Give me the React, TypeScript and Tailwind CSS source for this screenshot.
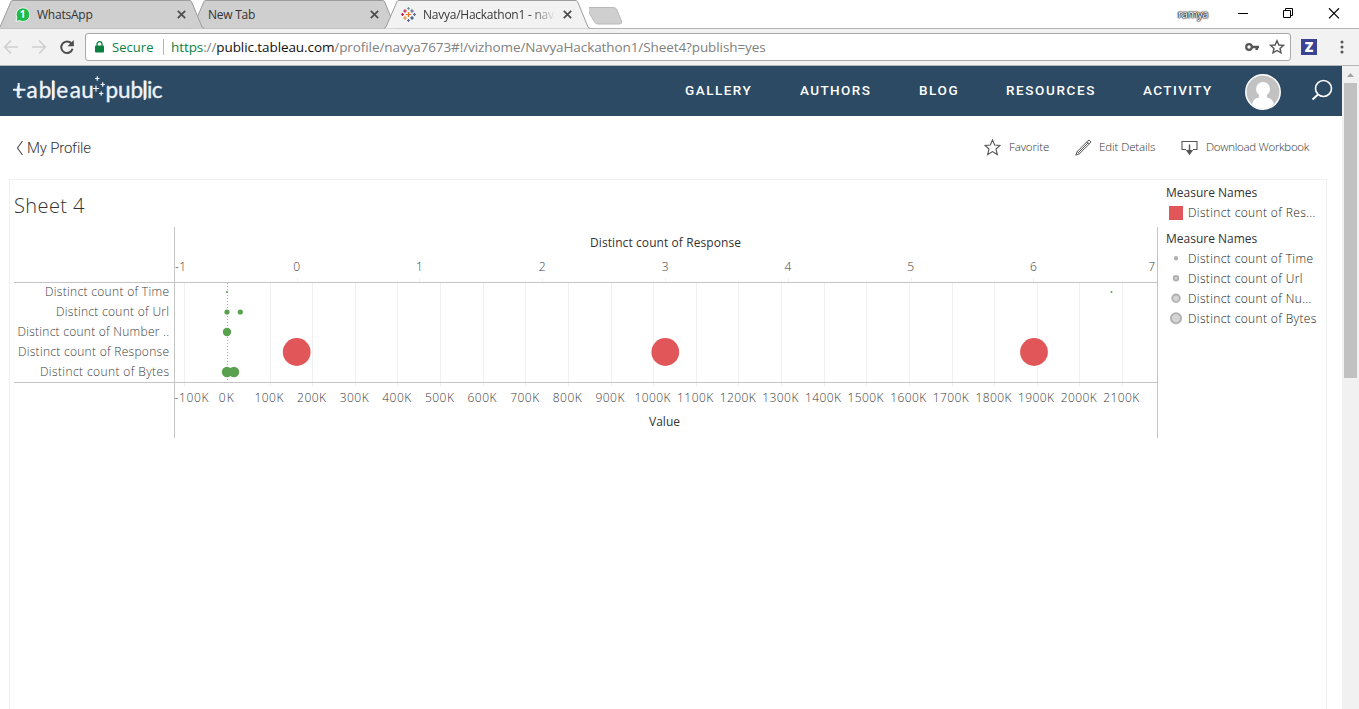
import React from 'react';

const UI = "font-['Open_Sans','Noto_Sans',sans-serif]";

function TabShape({ active }: { active?: boolean }) {
  return (
    <svg className="absolute inset-0" width="206" height="29" viewBox="0 0 206 29" aria-hidden="true">
      <path
        d="M0 28.5 L2 27 L13 1 Q13.500 0 15 0 L191 0 Q193 0 193.500 1 L204 27 L206 28.500 Z"
        fill={active ? '#f2f2f2' : '#cfcfcf'}
      />
      <path
        d="M0 28.500 L2 27 L13 1.500 Q13.500 .5 15 .5 L191 .5 Q193 .5 193.500 1.500 L204 27 L206 28.500"
        fill="none"
        stroke="#9d9d9d"
      />
    </svg>
  );
}

function CloseX() {
  return (
    <svg width="9" height="9" viewBox="0 0 9 9" className="shrink-0">
      <path d="M.8 .8 L8.200 8.200 M8.200 .8 L.8 8.200" stroke="#4c4c4c" strokeWidth="1.700" />
    </svg>
  );
}

const favicon: [number, number, number, string][] = [
  [7.5, 7.5, 2.6, '#e8762b'],
  [4, 4, 1.8, '#c7203e'],
  [11, 4, 1.8, '#5b6591'],
  [4, 11, 1.8, '#eb912b'],
  [11, 11, 1.8, '#1f447e'],
  [7.5, 1.5, 1.4, '#7099a5'],
  [7.5, 13.5, 1.4, '#5b6591'],
  [1.5, 7.5, 1.4, '#c7203e'],
  [13.5, 7.5, 1.4, '#5c6692'],
];

function TabStrip() {
  return (
    <div className="flex h-7 w-full items-start bg-white">
      <div className="relative z-20 -ml-0.5 flex h-[29px] w-[206px] shrink-0 items-center pl-[17px]">
        <TabShape />
        <svg className="relative shrink-0" width="15" height="15" viewBox="0 0 15 15">
          <path d="M1 14.500 L1.800 10.500 A6.800 6.800 0 1 1 4.500 13.500 Z" fill="#1cbb4a" stroke="#eef8ee" />
          <text x="7.700" y="11" fontSize="10" fontWeight="700" fill="#fff" textAnchor="middle" fontFamily="Open Sans">
            1
          </text>
        </svg>
        <span className="relative ml-[7px] w-[140px] text-[12px] tracking-[-0.22px] text-[#333]">WhatsApp</span>
        <span className="relative"><CloseX /></span>
      </div>
      <div className="relative z-10 -ml-[13px] flex h-[29px] w-[206px] shrink-0 items-center pl-[17px]">
        <TabShape />
        <span className="relative w-[162px] text-[12px] tracking-[-0.25px] text-[#333]">New Tab</span>
        <span className="relative"><CloseX /></span>
      </div>
      <div className="relative z-30 -ml-[13px] flex h-[29px] w-[206px] shrink-0 items-center pl-[17px]">
        <TabShape active />
        <svg className="relative shrink-0" width="15" height="15" viewBox="0 0 15 15">
          {favicon.map(([x, y, r, c], i) => (
            <path key={i} d={`M${x - r} ${y}H${x + r}M${x} ${y - r}V${y + r}`} stroke={c} strokeWidth="1.200" />
          ))}
        </svg>
        <span className="relative ml-[7px] w-[133px] whitespace-nowrap bg-gradient-to-r from-[#333] from-80% to-transparent bg-clip-text text-[12px] tracking-[-0.25px] text-transparent">
          Navya/Hackathon1 - nav
        </span>
        <span className="relative ml-[7px]"><CloseX /></span>
      </div>
      <svg className="-ml-px mt-[7px] shrink-0" width="36" height="18" viewBox="0 0 36 18">
        <path d="M1 .5 H25 Q27.500 .5 28.500 2 L33.500 14 Q34.500 17 31.500 17 H10 Q7.500 17 6.500 15 L-1 2 Q-1 .5 1 .5 Z" transform="translate(-1 0)" fill="#cfcfcf" stroke="#b9b9b9" />
      </svg>
      <div className="flex-1" />
      <span className="mr-[29px] mt-[6px] text-[11px] leading-4 tracking-[-0.45px] text-white [text-shadow:0_0_2px_#111,0_0_1px_#111,0_0_1px_#111,0_0_2px_#333]">
        ramya
      </span>
      <svg className="mt-2 shrink-0" width="122" height="12" viewBox="1237 8 122 12" fill="none" stroke="#000" strokeWidth="1">
        <path d="M1238 13.500H1248" />
        <path d="M1283.500 10.500H1290.500V17.500H1283.500Z M1285.500 10.500V8.500H1292.500V15.500H1290.500" />
        <path d="M1329 8.300L1339 18.300M1339 8.300L1329 18.300" strokeWidth="1.200" />
      </svg>
    </div>
  );
}

function Toolbar() {
  return (
    <div className="flex h-[38px] w-full items-center border-b border-t border-b-[#b4b6b8] border-t-[#b3b3b3] bg-[#f2f2f2]">
      <svg className="shrink-0" width="85" height="36" viewBox="0 29 85 36" fill="none" strokeWidth="1.600">
        <path d="M18 47H5M11 40.500L4.700 47L11 53.500" stroke="#cfcfcf" />
        <path d="M32 47H45M39 40.500L45.300 47L39 53.500" stroke="#cfcfcf" />
        <path d="M71.500 43.500A5.800 5.800 0 1 0 72.600 48.800" stroke="#4d4d4d" strokeWidth="2" />
        <path d="M73.800 40V46.300H67.500Z" fill="#4d4d4d" />
      </svg>
      <div className="flex h-7 w-[1206px] shrink-0 items-center rounded-[3px] border border-[#a8a8a8] bg-white pl-[9px] text-[14px]">
        <svg className="shrink-0" width="9" height="12" viewBox="0 0 9 12">
          <rect x="0" y="4.500" width="9" height="7" rx=".8" fill="#0b8043" />
          <path d="M2 5V3.200a2.500 2.500 0 0 1 5 0V5" fill="none" stroke="#0b8043" strokeWidth="1.300" />
        </svg>
        <span className="ml-2 w-[51px] pt-px text-[13px] tracking-[0.05px] text-[#0b8043]">Secure</span>
        <span className="h-4 w-px bg-[#b5b5b5]" />
        <span className="ml-[7px] whitespace-nowrap pt-px text-[13.5px] tracking-[-0.09px] text-[#808080]">
          <span className="text-[#0b8043]">https</span>://
          <span className="text-[#111]">public.tableau.com</span>
          /profile/navya7673#!/vizhome/NavyaHackathon1/Sheet4?publish=yes
        </span>
        <span className="flex-1" />
        <svg className="mr-[5px] shrink-0" width="41" height="16" viewBox="1244 39 41 16">
          <circle cx="1249" cy="47" r="2.800" fill="none" stroke="#555" strokeWidth="2.200" />
          <path d="M1252 45.800H1259V48.200H1258V50H1255.500V48.200H1252Z" fill="#555" />
          <path d="M1277 40.800L1278.900 45L1283.400 45.400L1280 48.400L1281 52.900L1277 50.500L1273 52.900L1274 48.400L1270.600 45.400L1275.100 45Z" fill="none" stroke="#555" strokeWidth="1.400" />
        </svg>
      </div>
      <span className="ml-[10px] flex size-4 items-center justify-center bg-[#3b4494] text-[14px] font-extrabold leading-4 text-white">Z</span>
      <svg className="ml-[22.5px]" width="4" height="14" viewBox="0 0 4 14" fill="#555">
        <circle cx="2" cy="2" r="1.500" />
        <circle cx="2" cy="7" r="1.500" />
        <circle cx="2" cy="12" r="1.500" />
      </svg>
    </div>
  );
}

function Logo() {
  return (
    <svg width="160" height="40" viewBox="8 72 160 40" fill="none" stroke="#edf3f9" className="shrink-0">
      <g fill="#edf3f9" strokeWidth=".35" fontFamily="Lato" fontSize="22.500">
        <text y="98.500" x="15.300 26.500 38.700 50.700 56.300 69.700 81.300">
          <tspan fontSize="18">t</tspan>ableau
        </text>
        <text y="98.500" x="105.500 118 130.600 142.500 147 151.800">public</text>
      </g>
      <path d="M13 90.700H25.500M18.700 84V96M52.900 81.500V101M144.700 81.500V101" strokeWidth="2" />
      <path d="M97.300 77.300V81.700M95.100 79.500H99.500M102.700 83.300V87.700M100.500 85.500H104.900M96 86.500V92.500M93 89.500H99M101.200 92.200V96.800M99 94.500H103.400" strokeWidth="1.200" />
    </svg>
  );
}

function SiteHeader() {
  return (
    <header className="flex h-[50px] shrink-0 items-center bg-[#2d4a64]">
      <div className="w-[677px] shrink-0 pl-2"><Logo /></div>
      <nav className="flex w-[568px] shrink-0 pb-[2px] pl-2 font-['Roboto',sans-serif] text-[13.5px] font-medium text-white">
        <a className="w-[115px] shrink-0 tracking-[1.5px]">GALLERY</a>
        <a className="w-[119px] shrink-0 tracking-[1.4px]">AUTHORS</a>
        <a className="w-[87px] shrink-0 tracking-[1.6px]">BLOG</a>
        <a className="w-[137px] shrink-0 tracking-[1.6px]">RESOURCES</a>
        <a className="shrink-0 tracking-[1.4px]">ACTIVITY</a>
      </nav>
      <svg className="shrink-0" width="36" height="50" viewBox="1245 66 36 50">
        <defs>
          <clipPath id="avatar"><circle cx="1263" cy="92" r="16.500" /></clipPath>
        </defs>
        <circle cx="1263" cy="92" r="17.200" fill="#c2c2c2" stroke="#fff" strokeWidth="1.500" />
        <g clipPath="url(#avatar)" fill="#fff">
          <circle cx="1263" cy="89" r="7" />
          <path d="M1259 93H1267V97.500C1272 98.500 1274 101 1274.500 109H1251.500C1252 101 1254 98.500 1259 97.500Z" />
        </g>
      </svg>
      <svg className="ml-[30px] shrink-0" width="24" height="24" viewBox="1311 79 24 24" fill="none" stroke="#fff">
        <circle cx="1323.500" cy="88.500" r="8" strokeWidth="1.600" />
        <path d="M1318 94.500L1312.500 99.500" strokeWidth="1.900" />
      </svg>
    </header>
  );
}

function ProfileBar() {
  return (
    <div className="flex h-[63px] shrink-0 items-center font-['Roboto',sans-serif] text-[#555]">
      <svg className="ml-[16px]" width="8" height="16" viewBox="0 0 8 16">
        <path d="M6.500 1L1.500 8L6.500 15" fill="none" stroke="#555" strokeWidth="1.200" />
      </svg>
      <span className="ml-[3px] pt-px text-[15px] font-light tracking-[-0.2px] text-[#333]">My Profile</span>
      <div className="flex-1" />
      <div className="flex items-center pr-[33px] font-['Open_Sans',sans-serif] text-[11.5px] font-light text-[#333]">
        <svg width="17" height="17" viewBox="0 0 17 17">
          <path d="M8.500 1L10.700 6L16 6.500L12 10L13.300 15.500L8.500 12.600L3.700 15.500L5 10L1 6.500L6.300 6Z" fill="none" stroke="#555" strokeWidth="1.100" />
        </svg>
        <span className="ml-2 w-[66px] whitespace-nowrap pb-px tracking-[-0.1px]">Favorite</span>
        <svg width="17" height="17" viewBox="0 0 17 17" fill="none" stroke="#555" strokeWidth="1">
          <path d="M.8 16.200L2.200 12.500L13 1.700Q14 .8 15 1.800Q16.300 2.900 15.300 4L4.500 14.700Z M2.200 12.500L4.500 14.700M12 2.700L14.300 5M3.500 13.500L13.200 3.800" />
        </svg>
        <span className="ml-[7px] w-[82px] whitespace-nowrap pb-px tracking-[-0.1px]">Edit Details</span>
        <svg width="17" height="16" viewBox="0 0 17 16">
          <path d="M5 9.500H1V1.500H16V9.500H12" fill="none" stroke="#555" strokeWidth="1.100" />
          <path d="M8.500 4.500V11" stroke="#555" strokeWidth="1.400" />
          <path d="M4.800 10H12.200L8.500 15.200Z" fill="#555" />
        </svg>
        <span className="ml-2 w-[103px] whitespace-nowrap pb-px tracking-[-0.3px]">Download Workbook</span>
      </div>
    </div>
  );
}

const rows: [string, number, number][] = [
  ['Distinct count of Time', 292, 124],
  ['Distinct count of Url', 312, 113],
  ['Distinct count of Number ..', 332, 151.5],
  ['Distinct count of Response', 352, 151],
  ['Distinct count of Bytes', 372, 129],
];

const greenDots: [number, number, number][] = [
  [227, 292, 1],
  [1111.5, 292, 1],
  [227, 312, 2.6],
  [240.3, 312, 2.6],
  [227, 332, 4.2],
  [227, 372, 5.2],
  [234, 372, 5.2],
];

function Chart() {
  const ticks = Array.from({ length: 23 }, (_, i) => i - 1);
  return (
    <svg width="1144" height="211" viewBox="14 227 1144 211" className="block" fontFamily="Open Sans" fontSize="12" fontWeight="300">
      {ticks.filter((t) => t !== 0).map((t) => (
        <path key={t} d={`M${Math.round(227 + t * 42.62) + 0.5} 283V386`} stroke="#f0f0f0" />
      ))}
      <path d="M227.500 283V382" stroke="#aaa" strokeDasharray="1 2" />
      {[0, 1, 2, 3, 4, 5, 6].map((n) => (
        <path key={n} d={`M${Math.round(296.5 + n * 122.8) + 0.5} 278V282`} stroke="#f0f0f0" />
      ))}
      <path d="M14 282.500H1157M14 382.500H1157M174.500 227V438M1157.500 227V438" stroke="#c4c4c4" />
      <g fill="#333" fontWeight="400">
        <text x="590" y="247" textLength="151">Distinct count of Response</text>
        <text x="649" y="426" textLength="31">Value</text>
      </g>
      <g fill="#3c3c3c">
        <text x="175" y="271" textLength="11">-1</text>
        {[0, 1, 2, 3, 4, 5, 6].map((n) => (
          <text key={n} x={296.7 + n * 122.8} y="271" textAnchor="middle">{n}</text>
        ))}
        <text x="1155" y="271" textAnchor="end">7</text>
        {rows.map(([label, y, w]) => (
          <text key={label} x={169 - w} y={y + 4.3} textLength={w}>{label}</text>
        ))}
        <text x="174.500" y="402" textLength="34">-100K</text>
        {ticks.filter((t) => t >= 0).map((t) => {
          const w = t === 0 ? 15 : t < 10 ? 29 : 36;
          return (
            <text key={t} x={226.3 + t * 42.62 - w / 2} y="402" textLength={w}>{t === 0 ? '0K' : `${t}00K`}</text>
          );
        })}
      </g>
      {greenDots.map(([x, y, r], i) => (
        <circle key={i} cx={x} cy={y} r={r} fill="#59a14f" />
      ))}
      {[296.7, 665.3, 1034].map((x) => (
        <circle key={x} cx={x} cy="352" r="13.900" fill="#e15759" />
      ))}
    </svg>
  );
}

const sizes: [string, number][] = [
  ['Distinct count of Time', 1.3],
  ['Distinct count of Url', 2.3],
  ['Distinct count of Nu...', 3.8],
  ['Distinct count of Bytes', 5.1],
];

function Legend() {
  return (
    <aside className="w-[160px] shrink-0 pt-[3px] text-[12px] leading-5 text-[#222]">
      <div className="text-[#333]">Measure Names</div>
      <div className="flex items-center whitespace-nowrap font-light">
        <span className="ml-[3px] mr-[5px] size-[14px] bg-[#e15759]" />
        <span className="tracking-[0.36px]">Distinct count of Res...</span>
      </div>
      <div className="mt-[6px] text-[#333]">Measure Names</div>
      {sizes.map(([label, r]) => (
        <div key={label} className="flex items-center whitespace-nowrap font-light">
          <svg className="ml-[3px] mr-[5px] shrink-0" width="14" height="14" viewBox="0 0 14 14">
            <circle cx="7" cy="6.300" r={r} fill="#d4d4d4" stroke="#b0b0b0" strokeWidth="1.800" />
          </svg>
          <span className="tracking-[0.36px]">{label}</span>
        </div>
      ))}
    </aside>
  );
}

export default function App() {
  return (
    <div className={`flex h-[709px] w-[1359px] flex-col overflow-hidden bg-white ${UI}`}>
      <TabStrip />
      <Toolbar />
      <div className="flex min-h-0 flex-1">
        <main className="flex w-[1342px] shrink-0 flex-col">
          <SiteHeader />
          <ProfileBar />
          <section className="ml-[9px] flex min-h-0 w-[1318px] flex-1 border-x border-t border-[#f0f0f0] pl-1">
            <div className="w-[1152px] shrink-0">
              <h1 className="h-[47px] pt-[11px] text-[20px] font-light leading-[30px] tracking-[0.4px] text-[#333]">Sheet 4</h1>
              <Chart />
            </div>
            <Legend />
          </section>
        </main>
        <div className="flex w-[17px] shrink-0 flex-col items-center bg-[#f1f1f1]">
          <svg width="17" height="17" viewBox="0 0 17 17" className="shrink-0">
            <path d="M5 11L8.500 7L12 11Z" fill="#a3a3a3" />
          </svg>
          <div className="h-[295px] w-[13px] bg-[#c1c1c1]" />
        </div>
      </div>
    </div>
  );
}
